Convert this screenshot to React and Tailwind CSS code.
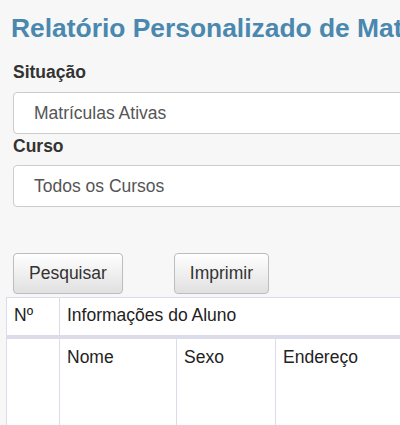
import React from "react";

const labelCls = "text-[17.5px] leading-[20px] font-bold text-[#333]";
const selectCls =
  "flex items-center h-[42px] w-[520px] border border-[#cccccc] rounded-[4px] bg-white pl-[20px] text-[17.5px] text-[#555]";
const btnCls =
  "h-[41px] px-[15px] border border-[#bdbdbd] rounded-[4px] bg-gradient-to-b from-white to-[#e0e0e0] text-[17.5px] text-[#333] leading-none";
const th = "border-l border-t border-[#dcdbe9] align-top text-left font-normal pt-[5px] pb-[7px] px-[7px] leading-[25px] whitespace-nowrap";
const td = "border-l border-t-[4px] border-[#dcdbe9] align-top text-left font-normal pt-[6px] px-[7px] leading-[25px] h-[100px] whitespace-nowrap";

const App = () => {
    return (
        <div className="w-[400px] h-[425px] overflow-hidden bg-[#f7f7f7] font-['Liberation_Sans',Arial,sans-serif]">
            <h1 className="pl-[11px] pt-[13px] text-[26.4px] leading-[30px] font-bold text-[#4a88af] whitespace-nowrap">
                Relatório Personalizado de Matrículas
            </h1>

            <div className="pl-[13px]">
                <p className={`${labelCls} mt-[19px] mb-[10px]`}>Situação</p>
                <div className={selectCls}>Matrículas Ativas</div>

                <p className={`${labelCls} mt-[2px] mb-[9px]`}>Curso</p>
                <div className={selectCls}>Todos os Cursos</div>

                <div className="flex gap-[51px] mt-[46px]">
                    <button type="button" className={btnCls}>Pesquisar</button>
                    <button type="button" className={btnCls}>Imprimir</button>
                </div>
            </div>

            <table className="ml-[6px] mt-[3px] w-[600px] table-fixed border-collapse bg-white text-[17.5px] text-[#222]">
                <colgroup>
                    <col className="w-[53px]" />
                    <col className="w-[117px]" />
                    <col className="w-[99px]" />
                    <col />
                </colgroup>
                <thead>
                    <tr>
                        <th className={th}>Nº</th>
                        <th className={th} colSpan={3}>Informações do Aluno</th>
                    </tr>
                    <tr>
                        <th className={td}></th>
                        <th className={td}>Nome</th>
                        <th className={td}>Sexo</th>
                        <th className={td}>Endereço</th>
                    </tr>
                </thead>
            </table>
        </div>
    );
}

export default App;
